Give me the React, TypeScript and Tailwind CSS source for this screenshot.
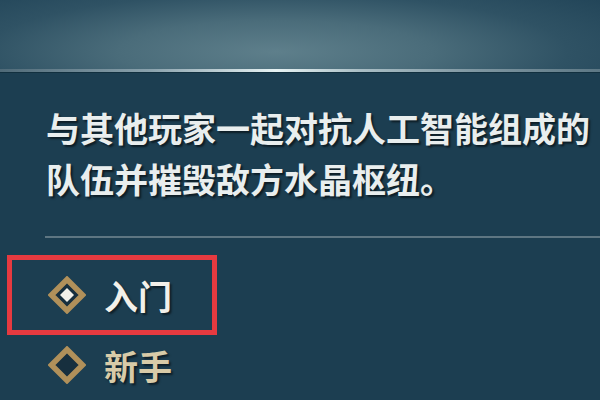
import React from 'react';

const Diamond: React.FC<{ active?: boolean }> = ({ active }) => (
  <svg width="38" height="38" viewBox="0 0 38 38" className="shrink-0">
    <polygon points="19,3.5 34.5,19 19,34.5 3.5,19" fill="#172f3e" stroke="#b0905a" strokeWidth="5.5" strokeLinejoin="miter" />
    {active && <polygon points="19,12 26,19 19,26 12,19" fill="#f3f1ea" />}
  </svg>
);

const font = "font-['Noto_Sans_CJK_SC','Noto_Sans',sans-serif]";

export default function App() {
  return (
    <div className={`w-[600px] h-[400px] overflow-hidden bg-[#1c3e51] ${font}`}>
      <div className="h-[69px] bg-[radial-gradient(ellipse_75%_130%_at_46%_75%,#5e7f8b_0%,#4a6c7a_35%,#2f5264_65%,#1f4256_100%)]" />
      <div className="h-[3px] bg-[linear-gradient(90deg,#4f6a78_0%,#8aa2ad_25%,#e6f2f3_46%,#a9bec5_60%,#7d95a0_80%,#5d7885_100%)]" />
      <div className="h-px bg-[#12303f]" />

      <div className="pl-[46px] pt-[29px] text-[34px] leading-[51px] font-semibold text-[#e9eeee] [text-shadow:2px_2px_2px_rgba(0,0,0,0.55)]">
        <p>与其他玩家一起对抗人工智能组成的</p>
        <p>队伍并摧毁敌方水晶枢纽。</p>
      </div>

      <div className="ml-[45px] mt-[32px] h-[2px] bg-[#5e7682]" />

      <div className="flex flex-col pt-[17px]">
        <div className="ml-[7px] w-[210px] h-[80px] border-[5px] border-[#e63a40] flex items-center pl-[36px] gap-[18px]">
          <Diamond active />
          <span className="text-[34px] font-bold text-[#f2f0ea] [text-shadow:2px_2px_2px_rgba(0,0,0,0.5)]">入门</span>
        </div>
        <div className="h-[60px] flex items-center pl-[48px] gap-[18px]">
          <Diamond />
          <span className="text-[34px] font-bold text-[#d8cba8] [text-shadow:2px_2px_2px_rgba(0,0,0,0.5)]">新手</span>
        </div>
      </div>
    </div>
  );
}
